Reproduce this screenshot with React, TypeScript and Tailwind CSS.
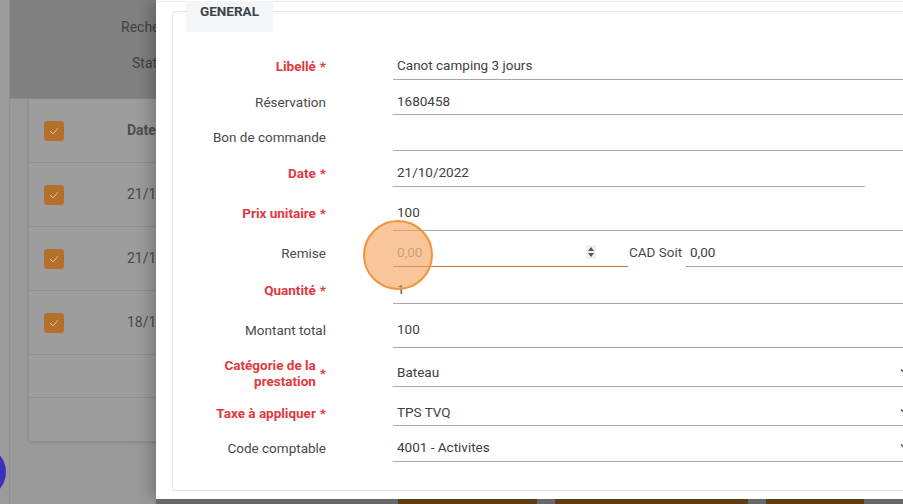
import React from "react";

type FieldProps = {
  label: string;
  required?: boolean;
  cls: string;
  value?: string;
  select?: boolean;
  cellCls?: string;
};

const Chevron = () => (
  <svg width="12" height="8" viewBox="0 0 12 8" className="mr-[3px] shrink-0">
    <path d="M1 1.5 L6 6.5 L11 1.5" fill="none" stroke="#555" strokeWidth="1.5" />
  </svg>
);

function Label({ label, required }: { label: string; required?: boolean }) {
  return (
    <div className="w-[153px] shrink-0 flex items-center justify-end pb-[2px] text-[13.5px] leading-[16px]">
      {required ? (
        <>
          <span className="font-bold text-[#e0393e] text-right">{label}</span>
          <span className="ml-[4px] font-bold text-[#e0393e]">*</span>
        </>
      ) : (
        <span className="text-[#4a4a4a] whitespace-nowrap">{label}</span>
      )}
    </div>
  );
}

function Field({ label, required, cls, value, select, cellCls }: FieldProps) {
  return (
    <div className={"flex " + cls}>
      <Label label={label} required={required} />
      <div
        className={
          "ml-[67px] border-b border-[#a8a8a8] flex items-center pl-[4px] pb-[2px] text-[13.5px] text-[#404040] " +
          (cellCls ?? "flex-1")
        }
      >
        <span className="flex-1 whitespace-nowrap">{value}</span>
        {select && <Chevron />}
      </div>
    </div>
  );
}

function Check() {
  return (
    <div className="w-[20px] h-[20px] rounded-[3px] bg-[#b4702a] flex items-center justify-center shrink-0">
      <svg width="12" height="10" viewBox="0 0 12 10">
        <path d="M2 5 L5 8 L10 2" fill="none" stroke="#dcc3a0" strokeWidth="1" />
      </svg>
    </div>
  );
}

function BgRow({ text, bold }: { text: string; bold?: boolean }) {
  return (
    <div className="h-[64px] border-b border-[#8f8f8f] flex items-center pl-[15px]">
      <Check />
      <span
        className={
          "ml-[63px] text-[14px] whitespace-nowrap " +
          (bold ? "font-bold text-[#4d4d4d]" : "text-[#474747]")
        }
      >
        {text}
      </span>
    </div>
  );
}

export default function App() {
  return (
    <div className="relative w-[903px] h-[504px] overflow-hidden flex font-['Roboto',sans-serif] bg-[#9a9a9a]">
      {/* page behind the dialog */}
      <div className="w-[156px] shrink-0 h-full flex overflow-hidden">
        <div className="w-[10px] shrink-0 bg-[#9b9b9b] border-r border-[#8f8f8f]" />
        <div className="flex-1 flex flex-col">
          <div className="h-[99px] shrink-0 bg-[#808080] border-b border-[#8a8a8a] flex flex-col pt-[17px] text-[14px] text-[#414141]">
            <div className="h-[20px] leading-[20px] pl-[111px] whitespace-nowrap">Recherche</div>
            <div className="h-[20px] leading-[20px] pl-[122px] mt-[16px] whitespace-nowrap">Statut</div>
          </div>
          <div className="pl-[18px]">
            <div className="w-[300px] bg-[#9d9d9d] border border-t-0 border-[#8e8e8e] rounded-bl-[4px] shadow-[0_1px_3px_rgba(0,0,0,0.12)]">
              <BgRow text="Date" bold />
              <BgRow text="21/10/2022" />
              <BgRow text="21/10/2022" />
              <BgRow text="18/10/2022" />
              <div className="h-[43px] border-b border-[#8f8f8f]" />
              <div className="h-[43px]" />
            </div>
          </div>
        </div>
      </div>

      {/* dialog */}
      <div className="relative z-10 w-[820px] shrink-0 flex flex-col">
        <div className="h-[499px] bg-white pt-[1px] px-[16px] shadow-[-6px_0_14px_rgba(0,0,0,0.22)]">
          <div className="h-px bg-[#ebebeb] -mx-[16px]" />
          <div className="relative mt-[9px] w-[760px] border border-[#e3e3e3] rounded-[4px] pt-[41px] pb-[28px] pr-[16px]">
            <div className="absolute top-[-11px] left-[13px] w-[87px] h-[31px] bg-[#f4f5f7] flex justify-center pt-[2px] text-[13.5px] leading-[17px] font-bold text-[#3d434b]">
              GENERAL
            </div>

            <Field label="Libellé" required cls="h-[27px]" value="Canot camping 3 jours" />
            <Field label="Réservation" cls="h-[25px] mt-[10px]" value="1680458" />
            <Field label="Bon de commande" cls="h-[27px] mt-[9px]" value="" />
            <Field label="Date" required cls="h-[27px] mt-[9px]" value="21/10/2022" cellCls="w-[472px]" />
            <Field label="Prix unitaire" required cls="h-[35px] mt-[9px]" value="100" />

            <div className="flex h-[27px] mt-[9px]">
              <Label label="Remise" />
              <div className="ml-[67px] flex-1 flex text-[13.5px]">
                <div className="w-[235px] border-b border-[#c8793a] flex items-center pl-[4px] pr-[32px] pb-[2px]">
                  <span className="flex-1 text-[#999]">0,00</span>
                  <div className="w-[10px] h-[14px] bg-[#efefef] rounded-[2px] flex flex-col items-center justify-center gap-[2px]">
                    <svg width="6" height="4" viewBox="0 0 6 4">
                      <path d="M0 4 L3 0 L6 4 Z" fill="#555" />
                    </svg>
                    <svg width="6" height="4" viewBox="0 0 6 4">
                      <path d="M0 0 L3 4 L6 0 Z" fill="#555" />
                    </svg>
                  </div>
                </div>
                <div className="w-[58px] flex items-center pl-[1px] pb-[2px] text-[#4a4a4a] whitespace-nowrap">CAD Soit</div>
                <div className="flex-1 border-b border-[#a8a8a8] flex items-center pl-[4px] pb-[2px] text-[#404040]">0,00</div>
              </div>
            </div>

            <Field label="Quantité" required cls="h-[27px] mt-[10px]" value="1" />
            <Field label="Montant total" cls="h-[35px] mt-[9px]" value="100" />
            <Field label="Catégorie de la prestation" required cls="h-[27px] mt-[12px]" value="Bateau" select />
            <Field label="Taxe à appliquer" required cls="h-[25px] mt-[14px]" value="TPS TVQ" select />
            <Field label="Code comptable" cls="h-[27px] mt-[9px]" value="4001 - Activites" select />
          </div>
        </div>
        <div className="h-[5px] bg-[#686868] flex">
          <div className="ml-[242px] w-[139px] bg-[#5e3d14]" />
          <div className="ml-[18px] w-[193px] bg-[#5e3d14]" />
          <div className="ml-[18px] w-[98px] bg-[#5e3d14]" />
        </div>
      </div>

      {/* touch indicator */}
      <div className="absolute z-20 left-[363px] top-[220px] w-[70px] h-[70px] rounded-full bg-[#f5a05a]/60 border-2 border-[#f3923a]" />
      {/* floating button behind overlay */}
      <div className="absolute left-[-46px] top-[446px] w-[52px] h-[52px] rounded-full bg-[#3b2fbf]" />
    </div>
  );
}
